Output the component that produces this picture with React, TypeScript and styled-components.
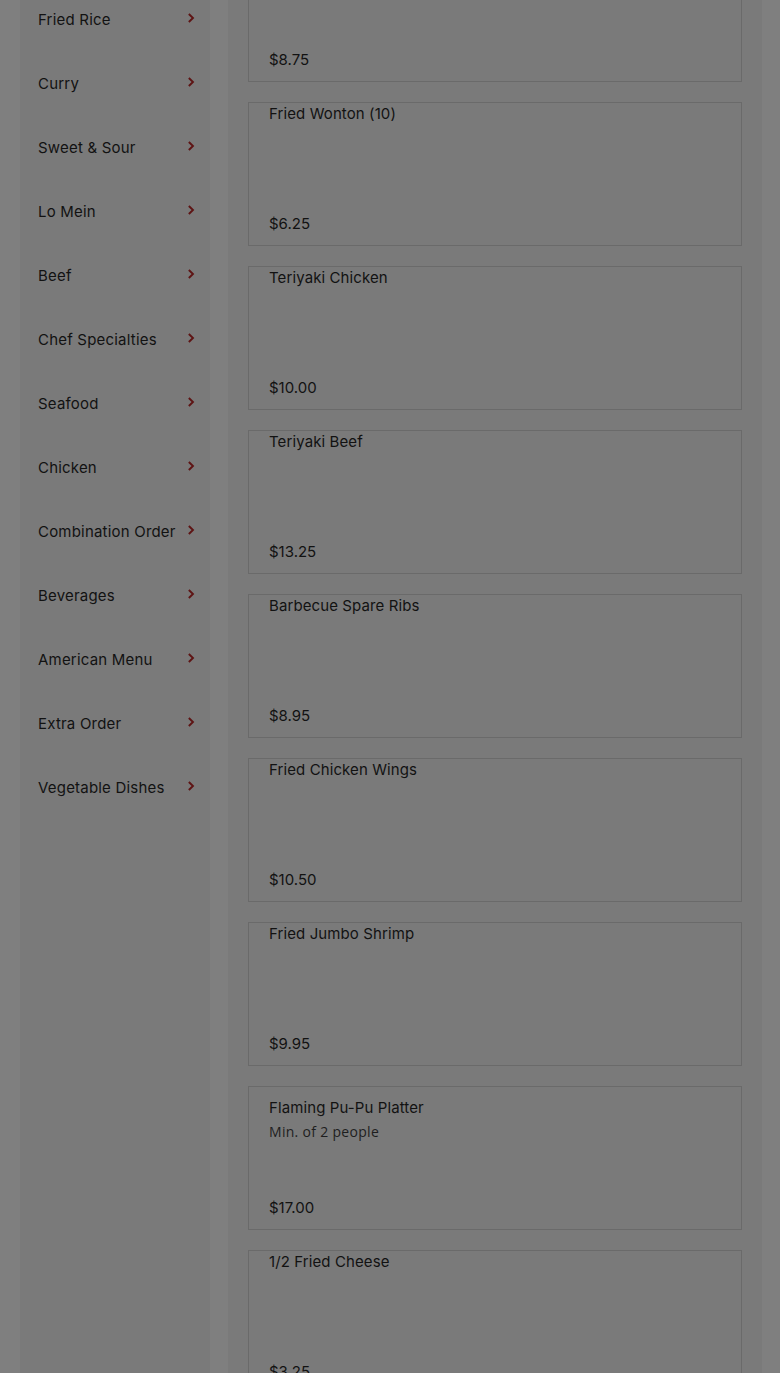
import styled, { createGlobalStyle } from 'styled-components';

const categories = [
	'Fried Rice',
	'Curry',
	'Sweet & Sour',
	'Lo Mein',
	'Beef',
	'Chef Specialties',
	'Seafood',
	'Chicken',
	'Combination Order',
	'Beverages',
	'American Menu',
	'Extra Order',
	'Vegetable Dishes',
];

type Item = { name: string; price: string; note?: string };

const items: Item[] = [
	{ name: 'Egg Roll (2)', price: '$8.75' },
	{ name: 'Fried Wonton (10)', price: '$6.25' },
	{ name: 'Teriyaki Chicken', price: '$10.00' },
	{ name: 'Teriyaki Beef', price: '$13.25' },
	{ name: 'Barbecue Spare Ribs', price: '$8.95' },
	{ name: 'Fried Chicken Wings', price: '$10.50' },
	{ name: 'Fried Jumbo Shrimp', price: '$9.95' },
	{ name: 'Flaming Pu-Pu Platter', price: '$17.00', note: 'Min. of 2 people' },
	{ name: '1/2 Fried Cheese', price: '$3.25' },
	{ name: 'Crab Rangoon (8)', price: '$7.50' },
];

export default function App() {
	return (
		<>
			<GlobalStyle />
			<Layout>
				<Sidebar>
					{categories.map((c) => (
						<CategoryRow key={c}>
							<span>{c}</span>
							<Chevron viewBox='0 0 8 12' aria-hidden>
								<path d='M1.6 0.4 L7.4 6 L1.6 11.6 L0 10 L4.1 6 L0 2 Z' />
							</Chevron>
						</CategoryRow>
					))}
				</Sidebar>

				<Panel>
					{items.map((item) => (
						<Card key={item.name}>
							<Info $withNote={!!item.note}>
								<Name>{item.name}</Name>
								{item.note && <Note>{item.note}</Note>}
							</Info>
							<Price>{item.price}</Price>
						</Card>
					))}
				</Panel>
			</Layout>
		</>
	);
}

const GlobalStyle = createGlobalStyle`
	html, body {
		margin: 0;
		padding: 0;
		background: #7f7f7f;
		overflow: hidden;
	}
	body {
		font-family: 'Inter', 'Liberation Sans', sans-serif;
		color: #121212;
	}
`;

// page is shown scrolled down a little, so the column tops sit above the fold
const Layout = styled.div`
	display: flex;
	align-items: stretch;
	gap: 18px;
	padding: 0 18px 0 20px;
	margin-top: -82px;
	min-height: 1500px;
`;

const Sidebar = styled.nav`
	width: 190px;
	flex-shrink: 0;
	background: #7a7a7a;
	padding-top: 69px;
`;

const CategoryRow = styled.div`
	height: 64px;
	display: flex;
	align-items: center;
	justify-content: space-between;
	padding: 0 15px 0 18px;
	font-size: 15px;
	font-weight: 400;
	letter-spacing: 0.2px;
`;

const Chevron = styled.svg`
	width: 7px;
	height: 10px;
	fill: #5e1414;
	margin-top: -2px;
`;

const Panel = styled.main`
	flex: 1;
	background: #7a7a7a;
	padding: 20px;
	display: flex;
	flex-direction: column;
	gap: 20px;
`;

const Card = styled.div`
	height: 144px;
	box-sizing: border-box;
	border: 1px solid #6a6a6a;
	padding: 0 20px 10px;
	display: flex;
	flex-direction: column;
	justify-content: space-between;
`;

const Info = styled.div<{ $withNote: boolean }>`
	padding-top: ${(p) => (p.$withNote ? '10px' : '0')};
`;

const Name = styled.div`
	font-size: 15px;
	line-height: 22px;
	letter-spacing: 0.1px;
`;

const Note = styled.div`
	font-family: 'Open Sans', 'Liberation Sans', sans-serif;
	font-size: 14px;
	line-height: 22px;
	margin-top: 2px;
	color: #1e1e1e;
	letter-spacing: 0.3px;
`;

const Price = styled.div`
	font-size: 15px;
	line-height: 22px;
`;
